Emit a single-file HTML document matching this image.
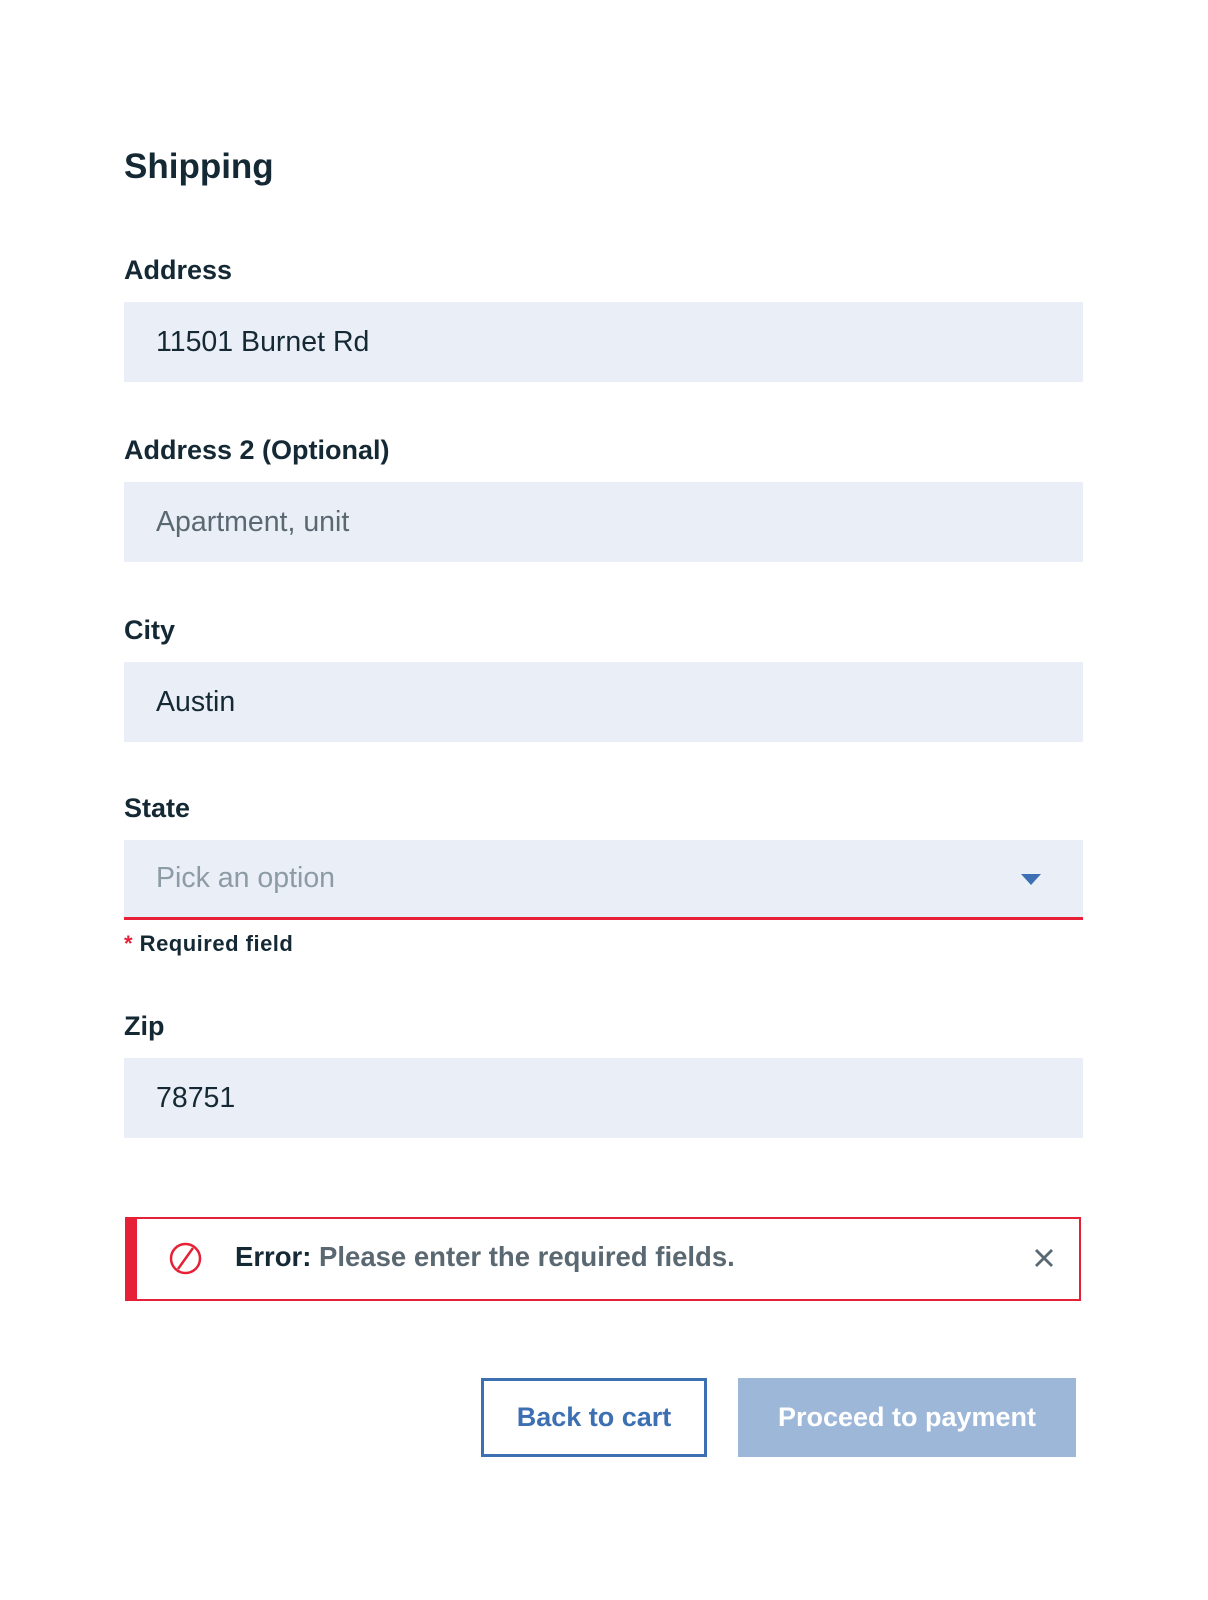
<!DOCTYPE html>
<html><head><style>
body{margin:0;width:1208px;height:1600px;background:#fff;font-family:"Liberation Sans",sans-serif;position:relative;color:#152935}
.a{position:absolute}
.lbl{position:absolute;left:124px;font-size:27px;font-weight:bold;line-height:32px;color:#152935}
.inp{position:absolute;left:124px;width:959px;height:80px;background:#eaeef6;font-size:28.5px;line-height:80px;box-sizing:border-box;padding-left:32px;color:#152935}
</style></head><body>
<div class="a" style="left:124px;top:144px;font-size:35px;font-weight:bold;line-height:46px">Shipping</div>
<div class="lbl" style="top:254px">Address</div>
<div class="inp" style="top:302px">11501 Burnet Rd</div>
<div class="lbl" style="top:434px">Address 2 (Optional)</div>
<div class="inp" style="top:482px;color:#5a6872">Apartment, unit</div>
<div class="lbl" style="top:614px">City</div>
<div class="inp" style="top:662px">Austin</div>
<div class="lbl" style="top:792px">State</div>
<div class="inp" style="top:840px;height:80px;line-height:77px;color:#8c9ba5;border-bottom:3px solid #e62037">Pick an option</div>
<svg class="a" style="left:1021px;top:874px" width="22" height="12"><path d="M0 0H20L10 11Z" fill="#3d70b2"/></svg>
<div class="a" style="left:124px;top:931px;font-size:22px;font-weight:bold;letter-spacing:0.5px;line-height:26px"><span style="color:#e62037">*</span> Required field</div>
<div class="lbl" style="top:1010px">Zip</div>
<div class="inp" style="top:1058px">78751</div>
<div class="a" style="left:125px;top:1217px;width:956px;height:84px;box-sizing:border-box;border:2px solid #e62037;border-left:12px solid #e62037"></div>
<svg class="a" style="left:168px;top:1241px" width="35" height="35"><circle cx="17.5" cy="17.5" r="14.5" fill="none" stroke="#e62037" stroke-width="2.5"/><path d="M25 7L10 28" stroke="#e62037" stroke-width="2.5"/></svg>
<div class="a" style="left:235px;top:1241px;font-size:27.5px;line-height:32px;font-weight:bold;color:#5a6872"><span style="color:#152935">Error:</span> Please enter the required fields.</div>
<svg class="a" style="left:1034px;top:1248px" width="20" height="20"><path d="M2 2L18 18M18 2L2 18" stroke="#5a6872" stroke-width="2.8"/></svg>
<div class="a" style="left:481px;top:1378px;width:226px;height:79px;box-sizing:border-box;border:3px solid #3d70b2;color:#3d70b2;font-size:27px;font-weight:bold;text-align:center;line-height:73px">Back to cart</div>
<div class="a" style="left:738px;top:1378px;width:338px;height:79px;background:#9db7d9;color:#fff;font-size:27px;font-weight:bold;text-align:center;line-height:79px">Proceed to payment</div>
</body></html>
